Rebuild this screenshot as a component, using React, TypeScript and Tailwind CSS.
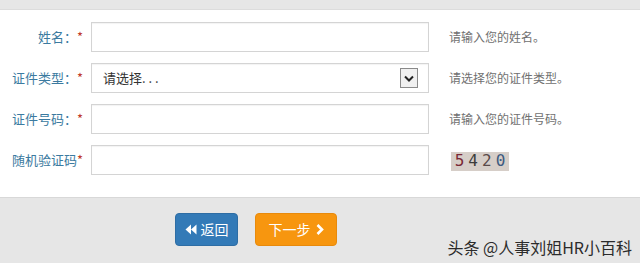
import React from 'react';

const font = { fontFamily: '"Microsoft YaHei", "Noto Sans CJK SC", "Noto Sans", sans-serif' };

const rows = [
  { label: '姓名：', help: '请输入您的姓名。', kind: 'input' },
  { label: '证件类型：', help: '请选择您的证件类型。', kind: 'select' },
  { label: '证件号码：', help: '请输入您的证件号码。', kind: 'input' },
  { label: '随机验证码', help: '', kind: 'captcha' },
];

function Field({ kind }: { kind: string }) {
  if (kind === 'select') {
    return (
      <div className="flex h-[30px] w-[338px] items-center justify-between border border-[#d4d4d4] bg-white pl-[11px] pr-[10px] shadow-[inset_0_1px_1px_rgba(0,0,0,0.05)]">
        <span className="text-[13px] text-[#333]">请选择. . .</span>
        <span className="flex h-[20px] w-[18px] items-center justify-center border border-[#8a8a8a] bg-[#f0f0f0]">
          <svg width="10" height="7" viewBox="0 0 10 7">
            <path d="M1 1.5 L5 5.5 L9 1.5" fill="none" stroke="#222" strokeWidth="2" />
          </svg>
        </span>
      </div>
    );
  }
  return (
    <div className="h-[30px] w-[338px] border border-[#d4d4d4] bg-white shadow-[inset_0_1px_1px_rgba(0,0,0,0.05)]" />
  );
}

export default function App() {
  return (
    <div className="relative h-[263px] w-[640px] overflow-hidden bg-white" style={font}>
      <div className="h-[10px] border-b border-[#dcdcdc] bg-[#e6e6e6]" />
      <div className="flex h-[187px] flex-col gap-[11px] pt-[12px]">
        {rows.map(r => (
          <div key={r.label} className="flex h-[30px] items-center">
            <div className="w-[83px] text-right text-[13px] text-[#3b7aa0]">
              {r.label}
              <span className="text-[#c0392b]">*</span>
            </div>
            <div className="ml-[8px]">
              <Field kind={r.kind} />
            </div>
            {r.kind === 'captcha' ? (
              <div className="ml-[22px] mt-[2px] flex h-[19px] w-[58px] items-center justify-center gap-[4px] bg-[#d6cec8] font-['DejaVu_Sans_Mono',monospace] text-[16px] leading-none">
                <span className="text-[#7a2836]">5</span>
                <span className="text-[#3c3c3c]">4</span>
                <span className="text-[#5a4a4a]">2</span>
                <span className="text-[#3d5a80]">0</span>
              </div>
            ) : (
              <div className="ml-[20px] text-[12px] text-[#707070]">{r.help}</div>
            )}
          </div>
        ))}
      </div>
      <div className="flex h-[66px] gap-[17px] border-t border-[#d8d8d8] bg-[#e6e6e6] pl-[175px] pt-[15px]">
        <button className="flex h-[33px] w-[63px] items-center justify-center gap-[4px] rounded-[4px] border border-[#2e6da4] bg-[#337ab7] text-[14px] text-white">
          <svg width="12" height="11" viewBox="0 0 12 11">
            <path d="M6 0.5 L0.5 5.5 L6 10.5 Z M11.5 0.5 L6 5.5 L11.5 10.5 Z" fill="#fff" />
          </svg>
          返回
        </button>
        <button className="flex h-[33px] w-[82px] items-center justify-center gap-[5px] rounded-[4px] border border-[#e88a0c] bg-[#f7960f] text-[14px] text-white">
          下一步
          <svg width="8" height="11" viewBox="0 0 8 11">
            <path d="M1.5 1 L6 5.5 L1.5 10" fill="none" stroke="#fff" strokeWidth="2.6" />
          </svg>
        </button>
      </div>
      <div className="absolute bottom-[8px] right-[8px] text-[16px] leading-none text-[#2b2b2b]">
        头条 @人事刘姐HR小百科
      </div>
    </div>
  );
}
